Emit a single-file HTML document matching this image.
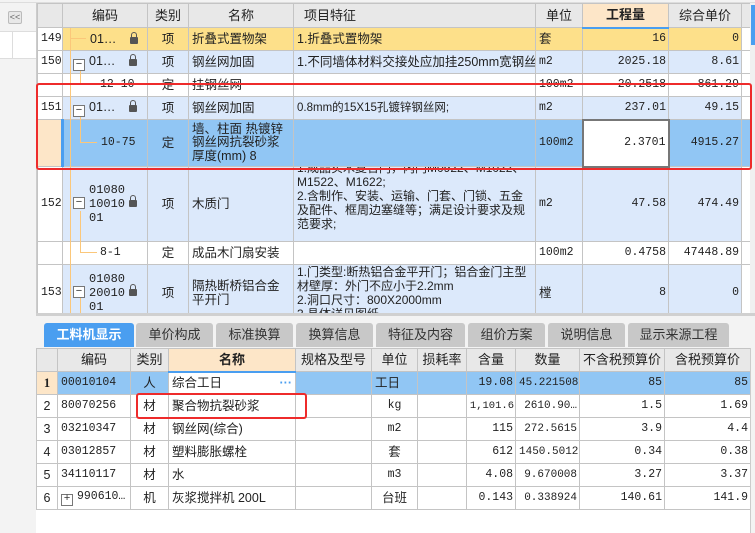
<!DOCTYPE html>
<html><head><meta charset="utf-8"><style>
*{margin:0;padding:0;box-sizing:border-box}
body{width:755px;height:533px;overflow:hidden;background:#fff;font-family:"Liberation Sans","Noto Sans CJK SC",sans-serif;font-size:13px;color:#222;position:relative}
.abs{position:absolute}
table{border-collapse:collapse;table-layout:fixed;position:absolute}
td{border:1px solid #c4c4c4;overflow:hidden;white-space:nowrap;padding:0 3px;vertical-align:middle;font-size:12.5px;line-height:14px}
td.r{text-align:right;padding-right:2px}
td.c{text-align:center}
td.n{font-family:"Liberation Mono","Noto Sans CJK SC",monospace;font-size:11.5px}
.hd td{background:#e8e8e8;text-align:center;font-size:13px}
.y td{background:#fde08a}
.b td{background:#dce9fb}
.w td{background:#fff}
.s td{background:#91c6f4}
.wrap{white-space:normal}
.lock{display:inline-block;width:8px;height:7px;background:#555;border-radius:1px;position:relative;margin-left:6px;vertical-align:-1px}
.lock:before{content:"";position:absolute;left:1px;top:-5px;width:4px;height:5px;border:1.5px solid #555;border-bottom:none;border-radius:3px 3px 0 0}
.box{display:inline-block;width:12px;height:12px;border:1px solid #777;background:#fff;font-size:11px;line-height:9px;text-align:center;vertical-align:-2px;margin-right:4px;color:#333;position:relative;z-index:2}
.tab{position:absolute;top:323px;height:24px;background:#c8c8c8;border-radius:3px 3px 0 0;text-align:center;line-height:24px;font-size:13px;color:#333}
.ol{position:absolute;background:#fbc77a;z-index:1}
</style></head><body>
<div class="abs" style="left:0;top:0;width:36px;height:533px;background:#f3f3f3"></div>
<div class="abs" style="left:0;top:0;width:755px;height:3px;background:#f3f3f3;border-bottom:1px solid #ddd"></div>
<div class="abs" style="left:0;top:31px;width:36px;height:28px;background:#fff;border-top:1px solid #ddd;border-bottom:1px solid #ddd"></div>
<div class="abs" style="left:12px;top:31px;width:1px;height:28px;background:#ddd"></div>
<div class="abs" style="left:8px;top:11px;width:14px;height:13px;border:1px solid #bbb;border-radius:2px;background:#e8e8e8;font-size:9px;line-height:11px;text-align:center;color:#666">&lt;&lt;</div>
<div class="abs" style="left:36px;top:3px;width:2px;height:312px;background:#ccc"></div>

<table style="left:37px;top:3px;width:713px">
<colgroup><col style="width:25px"><col style="width:85px"><col style="width:41px"><col style="width:105px"><col style="width:242px"><col style="width:47px"><col style="width:86px"><col style="width:73px"><col style="width:9px"></colgroup>
<tr class="hd" style="height:24px"><td></td><td>编码</td><td>类别</td><td>名称</td><td style="text-align:left;padding-left:10px">项目特征</td><td>单位</td><td style="background:#fde6c8;font-weight:bold;border-bottom:2px solid #4a9ef0">工程量</td><td>综合单价</td><td></td></tr>
<tr class="y" style="height:23px"><td class="n" style="background:#fff">149</td><td style="padding-left:27px">01…<span class="lock" style="margin-left:14px"></span></td><td class="c">项</td><td>折叠式置物架</td><td>1.折叠式置物架</td><td>套</td><td class="r n">16</td><td class="r n">0</td><td style="background:#fff"></td></tr>
<tr class="b" style="height:23px"><td class="n" style="background:#fff">150</td><td style="padding-left:10px"><span class="box">−</span>01…<span class="lock" style="margin-left:14px"></span></td><td class="c">项</td><td>钢丝网加固</td><td>1.不同墙体材料交接处应加挂250mm宽钢丝网</td><td class="n">m2</td><td class="r n">2025.18</td><td class="r n">8.61</td><td style="background:#fff"></td></tr>
<tr class="w" style="height:23px"><td></td><td class="n" style="padding-left:37px">12-10</td><td class="c">定</td><td>挂钢丝网</td><td></td><td class="n">100m2</td><td class="r n">20.2518</td><td class="r n">861.29</td><td></td></tr>
<tr class="b" style="height:23px"><td class="n" style="background:#fff">151</td><td style="padding-left:10px"><span class="box">−</span>01…<span class="lock" style="margin-left:14px"></span></td><td class="c">项</td><td>钢丝网加固</td><td style="font-size:11.5px">0.8mm的15X15孔镀锌钢丝网;</td><td class="n">m2</td><td class="r n">237.01</td><td class="r n">49.15</td><td style="background:#fff"></td></tr>
<tr class="s" style="height:47px"><td style="background:#fde6c8;border-right:3px solid #4a9ef0"></td><td class="n" style="padding-left:37px">10-75</td><td class="c">定</td><td class="wrap" style="line-height:13.5px">墙、柱面 热镀锌钢丝网抗裂砂浆厚度(mm) 8</td><td></td><td class="n">100m2</td><td class="r n" style="background:#fff;border:2px solid #777">2.3701</td><td class="r n">4915.27</td><td></td></tr>
<tr class="b" style="height:75px"><td class="n" style="background:#fff">152</td><td style="padding-left:10px;white-space:normal;line-height:14px"><span class="box" style="float:left;margin-top:14px">−</span><span style="float:left;width:32px;font-family:'Liberation Mono',monospace;font-size:12px">01080 10010 01</span><span class="lock" style="float:left;margin-top:17px;margin-left:8px"></span></td><td class="c">项</td><td>木质门</td><td class="wrap" style="line-height:14px;font-size:12px;vertical-align:top;padding-top:0"><div style="margin-top:-6px">1.成品实木复合门，内门M0922、M1022、M1522、M1622;<br>2.含制作、安装、运输、门套、门锁、五金及配件、框周边塞缝等；满足设计要求及规范要求;</div></td><td class="n">m2</td><td class="r n">47.58</td><td class="r n">474.49</td><td style="background:#fff"></td></tr>
<tr class="w" style="height:23px"><td></td><td class="n" style="padding-left:37px">8-1</td><td class="c">定</td><td>成品木门扇安装</td><td></td><td class="n">100m2</td><td class="r n">0.4758</td><td class="r n">47448.89</td><td></td></tr>
<tr class="b" style="height:49px"><td class="n" style="background:#fff">153</td><td style="padding-left:10px;white-space:normal"><span class="box" style="float:left;margin-top:14px">−</span><span style="float:left;width:32px;font-family:'Liberation Mono',monospace;font-size:12px">01080 20010 01</span><span class="lock" style="float:left;margin-top:17px;margin-left:8px"></span></td><td class="c">项</td><td class="wrap">隔热断桥铝合金平开门</td><td class="wrap" style="vertical-align:top;font-size:12px;line-height:14px">1.门类型:断热铝合金平开门；铝合金门主型材壁厚：外门不应小于2.2mm<br>2.洞口尺寸：800X2000mm<br>3.具体详见图纸</td><td>樘</td><td class="r n">8</td><td class="r n">0</td><td style="background:#fff"></td></tr>
</table>
<!-- tree lines -->
<div class="ol" style="left:70px;top:28px;width:1px;height:285px"></div>
<div class="ol" style="left:70px;top:38px;width:16px;height:1px"></div>
<div class="ol" style="left:80px;top:67px;width:1px;height:18px"></div>
<div class="ol" style="left:80px;top:84px;width:17px;height:1px"></div>
<div class="ol" style="left:80px;top:113px;width:1px;height:30px"></div>
<div class="ol" style="left:80px;top:142px;width:17px;height:1px"></div>
<div class="ol" style="left:80px;top:211px;width:1px;height:42px"></div>
<div class="ol" style="left:80px;top:252px;width:17px;height:1px"></div>
<div class="ol" style="left:80px;top:298px;width:1px;height:15px"></div>

<div class="abs" style="left:750px;top:3px;width:5px;height:312px;background:#f0f0f0"></div>
<div class="abs" style="left:751px;top:5px;width:4px;height:40px;background:#4a9ef0"></div>
<div class="abs" style="left:36px;top:83px;width:716px;height:87px;border:2.5px solid #ee2b2b;border-radius:3px;z-index:3"></div>

<div class="abs" style="left:36px;top:313px;width:719px;height:220px;background:#fff;border-top:3px solid #d0d0d0;z-index:4"></div>
<div class="abs" style="left:36px;top:316px;width:719px;height:32px;background:#f3f3f3;z-index:4"></div>
<div style="position:absolute;left:0;top:0;z-index:5">
<div class="tab" style="left:44px;width:90px;background:#4a9ef0;color:#fff;font-weight:bold">工料机显示</div>
<div class="tab" style="left:136px;width:77px">单价构成</div>
<div class="tab" style="left:216px;width:77px">标准换算</div>
<div class="tab" style="left:296px;width:77px">换算信息</div>
<div class="tab" style="left:376px;width:89px">特征及内容</div>
<div class="tab" style="left:468px;width:77px">组价方案</div>
<div class="tab" style="left:548px;width:77px">说明信息</div>
<div class="tab" style="left:628px;width:101px">显示来源工程</div>

<table style="left:36px;top:348px;width:714px">
<colgroup><col style="width:21px"><col style="width:73px"><col style="width:38px"><col style="width:127px"><col style="width:76px"><col style="width:46px"><col style="width:49px"><col style="width:49px"><col style="width:64px"><col style="width:85px"><col style="width:86px"></colgroup>
<tr class="hd" style="height:23px"><td></td><td>编码</td><td>类别</td><td style="background:#fde6c8;font-weight:bold;border-bottom:2px solid #4a9ef0">名称</td><td>规格及型号</td><td>单位</td><td>损耗率</td><td>含量</td><td>数量</td><td>不含税预算价</td><td>含税预算价</td></tr>
<tr class="s" style="height:23px"><td class="c" style="background:#fde6c8;font-weight:bold;font-family:'Liberation Serif',serif">1</td><td class="n">00010104</td><td class="c">人</td><td style="background:#fff">综合工日<span style="float:right;color:#4a9ef0;font-weight:bold">···</span></td><td></td><td>工日</td><td></td><td class="r n">19.08</td><td class="r n" style="font-size:11px">45.221508</td><td class="r n">85</td><td class="r n">85</td></tr>
<tr class="w" style="height:23px"><td class="c">2</td><td class="n">80070256</td><td class="c">材</td><td>聚合物抗裂砂浆</td><td></td><td class="c n">kg</td><td></td><td class="r n" style="font-size:10.5px;padding:0 1px">1,101.6</td><td class="r n" style="font-size:11px">2610.90…</td><td class="r n">1.5</td><td class="r n">1.69</td></tr>
<tr class="w" style="height:23px"><td class="c">3</td><td class="n">03210347</td><td class="c">材</td><td>钢丝网(综合)</td><td></td><td class="c n">m2</td><td></td><td class="r n">115</td><td class="r n" style="font-size:11px">272.5615</td><td class="r n">3.9</td><td class="r n">4.4</td></tr>
<tr class="w" style="height:23px"><td class="c">4</td><td class="n">03012857</td><td class="c">材</td><td>塑料膨胀螺栓</td><td></td><td class="c">套</td><td></td><td class="r n">612</td><td class="r n" style="font-size:11px">1450.5012</td><td class="r n">0.34</td><td class="r n">0.38</td></tr>
<tr class="w" style="height:23px"><td class="c">5</td><td class="n">34110117</td><td class="c">材</td><td>水</td><td></td><td class="c n">m3</td><td></td><td class="r n">4.08</td><td class="r n" style="font-size:11px">9.670008</td><td class="r n">3.27</td><td class="r n">3.37</td></tr>
<tr class="w" style="height:23px"><td class="c">6</td><td class="n"><span class="box">+</span>990610…</td><td class="c">机</td><td>灰浆搅拌机 200L</td><td></td><td class="c">台班</td><td></td><td class="r n">0.143</td><td class="r n" style="font-size:11px">0.338924</td><td class="r n">140.61</td><td class="r n">141.9</td></tr>
</table>
<div class="abs" style="left:750px;top:348px;width:5px;height:185px;background:#f3f3f3;border-left:1px solid #ccc"></div>
<div class="abs" style="left:136px;top:393px;width:171px;height:26px;border:2.5px solid #ee2b2b;border-radius:3px"></div>
</div>
</body></html>
